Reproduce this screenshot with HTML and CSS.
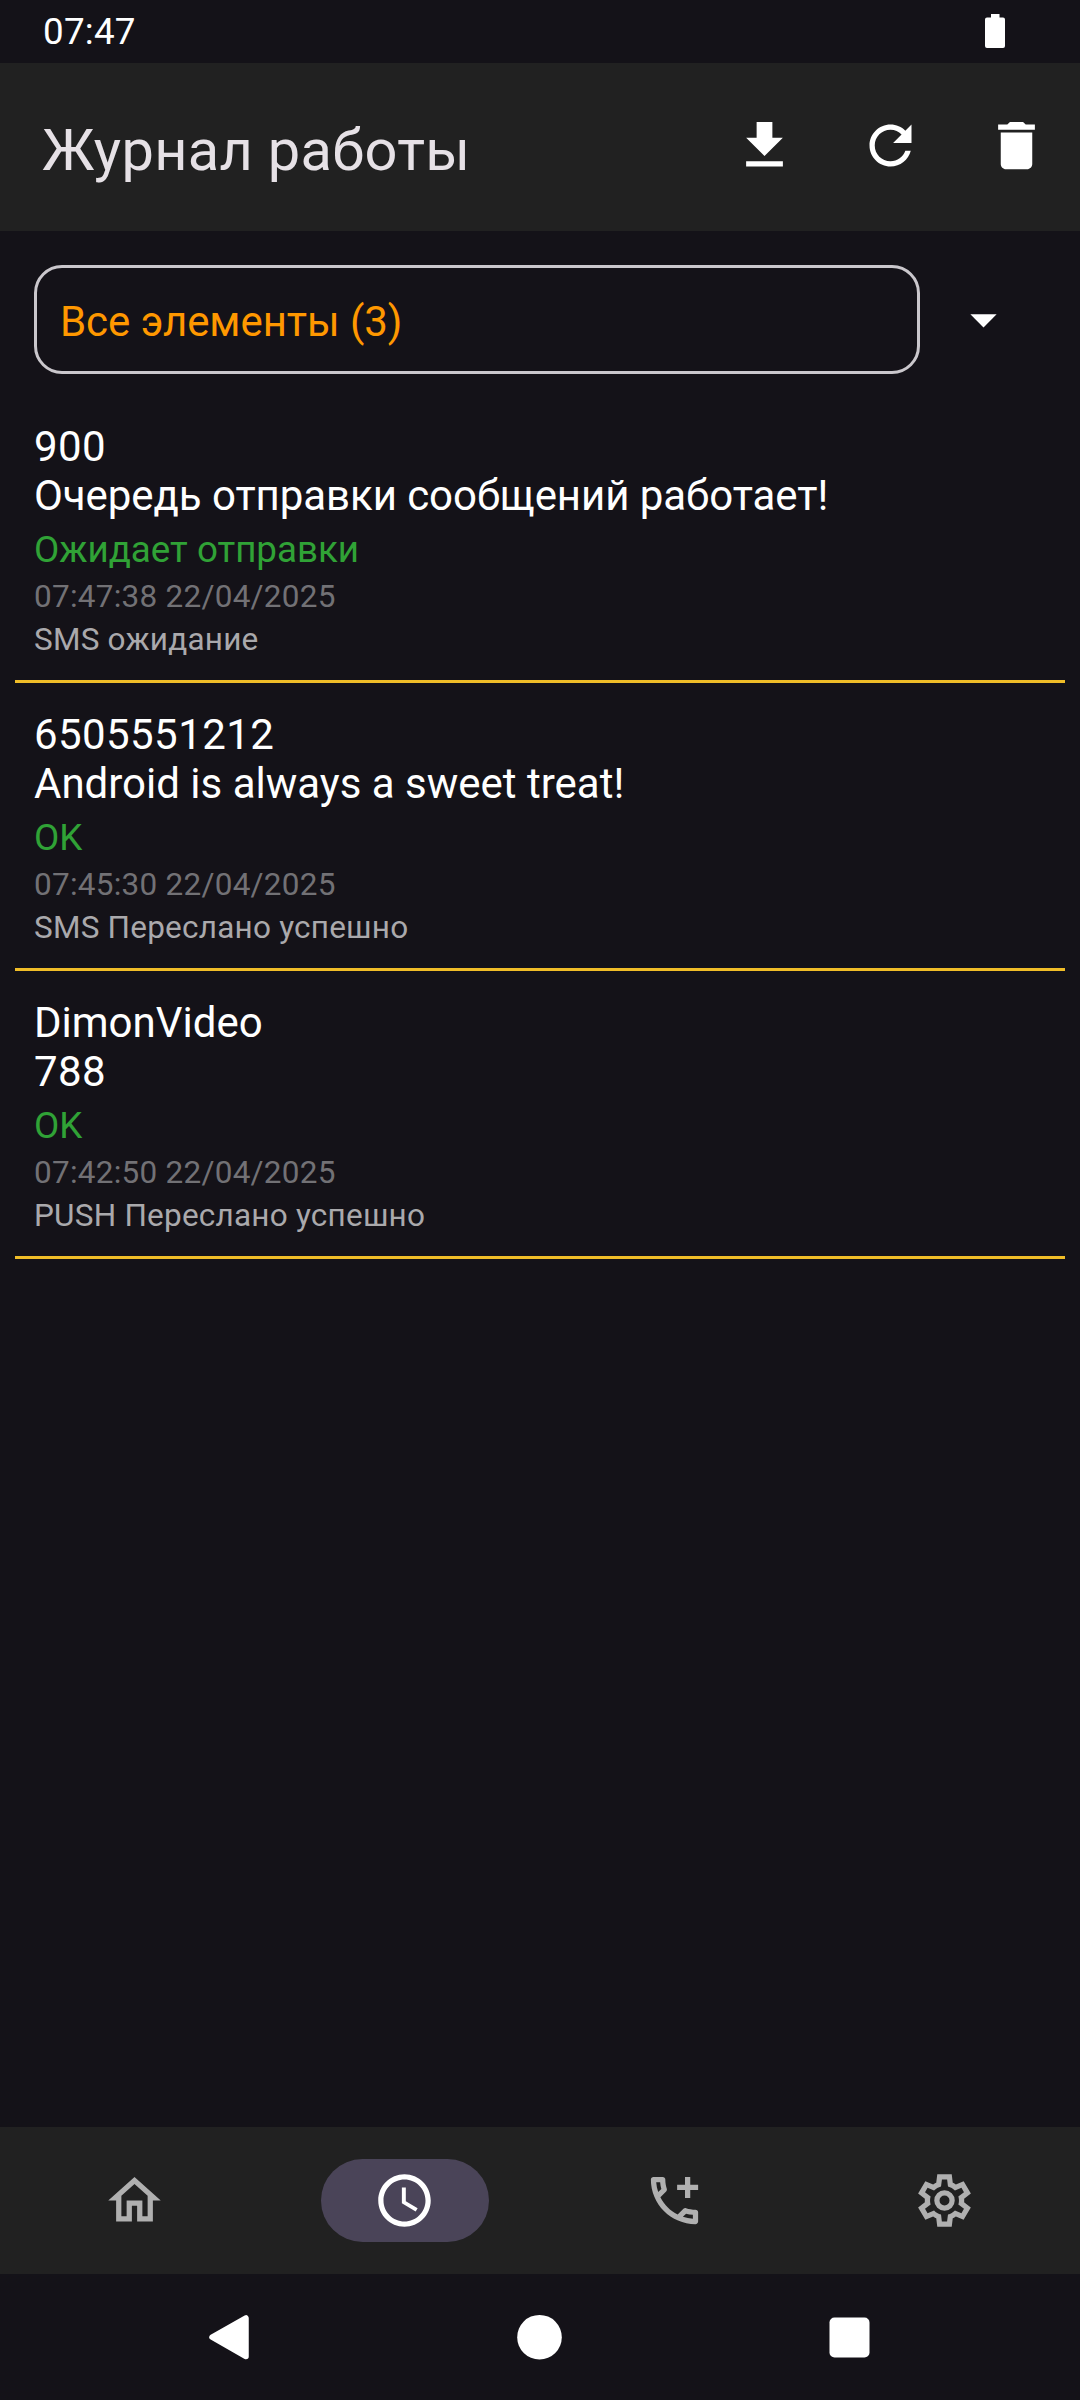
FILE: index.html
```html
<!DOCTYPE html>
<html lang="ru">
<head>
<meta charset="utf-8">
<title>Журнал работы</title>
<link rel="stylesheet" href="styles.css">
</head>
<body>
<div class="status-bar">
  <span class="clock">07:47</span>
  <svg class="battery" viewBox="0 0 20 34"><path d="M6 0h8.500v3.500H18a2 2 0 0 1 2 2V32a2 2 0 0 1-2 2H2a2 2 0 0 1-2-2V5.500a2 2 0 0 1 2-2h4z"/></svg>
</div>
<header class="app-bar">
  <h1 class="title">Журнал работы</h1>
  <div class="actions">
    <svg class="icon" viewBox="0 0 24 24"><path d="M19 9h-4V3H9v6H5l7 7 7-7zM5 18v2h14v-2H5z"/></svg>
    <svg class="icon" viewBox="0 0 24 24"><path d="M17.650 6.350C16.200 4.900 14.210 4 12 4c-4.420 0-7.990 3.580-7.990 8s3.570 8 7.990 8c3.730 0 6.840-2.550 7.730-6h-2.080c-.82 2.330-3.040 4-5.650 4-3.310 0-6-2.690-6-6s2.690-6 6-6c1.660 0 3.140.69 4.220 1.780L13 11h7V4l-2.350 2.350z"/></svg>
    <svg class="icon" viewBox="0 0 24 24"><path d="M6 19c0 1.100.9 2 2 2h8c1.100 0 2-.9 2-2V7H6v12zM19 4h-3.500l-1-1h-5l-1 1H5v2h14V4z"/></svg>
  </div>
</header>
<main class="content">
  <div class="filter">
    <div class="filter-value">Все элементы (3)</div>
    <svg class="icon" viewBox="0 0 24 24"><path d="M7 10l5 5 5-5z"/></svg>
  </div>
  <ul class="log">
    <li class="entry">
      <p class="text digits">900</p>
      <p class="text cyrillic">Очередь отправки сообщений работает!</p>
      <p class="state">Ожидает отправки</p>
      <p class="time">07:47:38 22/04/2025</p>
      <p class="result">SMS ожидание</p>
    </li>
    <li class="entry">
      <p class="text digits">6505551212</p>
      <p class="text">Android is always a sweet treat!</p>
      <p class="state">OK</p>
      <p class="time">07:45:30 22/04/2025</p>
      <p class="result">SMS Переслано успешно</p>
    </li>
    <li class="entry">
      <p class="text">DimonVideo</p>
      <p class="text digits">788</p>
      <p class="state">OK</p>
      <p class="time">07:42:50 22/04/2025</p>
      <p class="result">PUSH Переслано успешно</p>
    </li>
  </ul>
</main>
<nav class="tabs">
  <div class="tab"><span class="pill"><svg class="icon" viewBox="0 0 24 24"><path d="M12 5.690l5 4.500V18h-2v-6H9v6H7v-7.810l5-4.500M12 3L2 12h3v8h6v-6h2v6h6v-8h3L12 3z"/></svg></span></div>
  <div class="tab active"><span class="pill"><svg class="icon" viewBox="0 0 24 24"><path d="M11.990 2C6.470 2 2 6.480 2 12s4.470 10 9.990 10C17.520 22 22 17.520 22 12S17.520 2 11.990 2zM12 20c-4.420 0-8-3.580-8-8s3.580-8 8-8 8 3.580 8 8-3.580 8-8 8zm.5-13H11v6l5.250 3.150.75-1.230-4.500-2.670z"/></svg></span></div>
  <div class="tab"><span class="pill"><svg class="icon" viewBox="0 0 24 24"><path d="M20 15.500c-1.250 0-2.450-.2-3.570-.57-.1-.03-.21-.05-.31-.05-.26 0-.51.1-.71.290l-2.200 2.200c-2.830-1.440-5.150-3.750-6.590-6.590l2.200-2.200c.28-.28.360-.67.250-1.020C8.700 6.450 8.500 5.250 8.500 4c0-.55-.45-1-1-1H4c-.55 0-1 .45-1 1 0 9.390 7.610 17 17 17 .55 0 1-.45 1-1v-3.500c0-.55-.45-1-1-1zM5.030 5h1.500c.07.880.22 1.750.460 2.590L5.790 8.800c-.41-1.210-.67-2.480-.76-3.800zM19 18.970c-1.320-.09-2.600-.35-3.800-.76l1.200-1.200c.85.240 1.720.390 2.600.450v1.510zM18 6V3h-2v3h-3v2h3v3h2V8h3V6z"/></svg></span></div>
  <div class="tab"><span class="pill"><svg class="icon" viewBox="0 0 24 24"><path fill-rule="evenodd" d="M9.250 22l-.4-3.200q-.325-.125-.612-.3-.288-.175-.563-.375L4.700 19.375l-2.750-4.750 2.575-1.950Q4.500 12.500 4.500 12.337v-.675q0-.162.025-.337L1.950 9.375l2.750-4.750 2.975 1.250q.275-.2.575-.375.3-.175.6-.3l.4-3.200h5.500l.4 3.200q.325.125.613.3.287.175.562.375l2.975-1.250 2.750 4.750-2.575 1.950q.025.175.025.337v.675q0 .163-.05.338l2.575 1.950-2.750 4.750-2.950-1.250q-.275.2-.575.375-.3.175-.6.3l-.4 3.200ZM11 20h1.975l.35-2.650q.775-.2 1.438-.588.662-.387 1.212-.937l2.475 1.025.975-1.700-2.150-1.625q.125-.35.175-.738.05-.387.05-.787t-.05-.788q-.05-.387-.175-.737l2.150-1.625-.975-1.700-2.475 1.050q-.55-.575-1.212-.963-.663-.387-1.438-.587L13 4h-1.975l-.35 2.650q-.775.2-1.437.587-.663.388-1.213.938L5.550 7.150l-.975 1.700 2.150 1.600q-.125.375-.175.75-.05.375-.05.8 0 .4.05.775.05.375.175.75l-2.150 1.625.975 1.700 2.475-1.050q.55.575 1.213.962.662.388 1.437.588Z"/><circle class="hub" cx="12" cy="12" r="2.900"/></svg></span></div>
</nav>
<footer class="system-nav">
  <svg viewBox="0 0 1080 126"><path d="M246 44v38.500L212 63.200z" stroke="#fff" stroke-width="5.500" stroke-linejoin="round"/><circle cx="539.500" cy="63.200" r="22.300"/><rect x="829.500" y="43.500" width="40" height="40" rx="5"/></svg>
</footer>
</body>
</html>
```
FILE: styles.css
```css
* { box-sizing: border-box; margin: 0; padding: 0; }
body {
  width: 1080px;
  height: 2400px;
  display: flex;
  flex-direction: column;
  background: #141218;
  color: #fff;
  font-family: Roboto, "Noto Sans", sans-serif;
  overflow: hidden;
}
svg { display: block; fill: currentColor; }
.icon { width: 63px; height: 63px; flex: none; }

.status-bar {
  height: 63px;
  display: flex;
  justify-content: space-between;
  padding: 0 75px 0 43px;
}
.clock { font-size: 36.75px; line-height: 43px; padding-top: 10px; letter-spacing: 0.25px; }
.battery { width: 20px; height: 34px; margin-top: 14px; }

.app-bar {
  height: 168px;
  display: flex;
  justify-content: space-between;
  padding: 0 32px 0 42px;
  background: #212121;
}
.title {
  padding-top: 53px;
  font-size: 57.75px;
  font-weight: 400;
  line-height: 68px;
  letter-spacing: 0.3px;
  color: #e6e1e6;
}
.actions { display: flex; gap: 63px; padding-top: 51px; }

.content { flex: 1; padding: 34px 15px 0; }
.filter { display: flex; align-items: center; gap: 32px; padding-left: 19px; }
.filter-value {
  width: 886px;
  height: 109px;
  padding-left: 23px;
  border: 3px solid #cac7cc;
  border-radius: 28px;
  color: #ff9800;
  font-size: 42px;
  line-height: 107px;
  letter-spacing: -0.05px;
}
.log { list-style: none; padding-top: 21px; }
.entry { padding: 27px 19px 22px; border-bottom: 3px solid #f0bd28; }
.text { font-size: 42px; line-height: 49px; }
.digits { letter-spacing: 0.42px; }
.cyrillic { letter-spacing: -0.06px; }
.state { margin-top: 8px; font-size: 36.75px; line-height: 43px; color: #30a236; }
.time { margin-top: 7px; font-size: 31.5px; line-height: 37px; letter-spacing: 0.25px; color: #727175; }
.result { margin-top: 6px; font-size: 31.5px; line-height: 37px; letter-spacing: 0.22px; color: #aaa9ac; }

.tabs { height: 147px; display: flex; background: #212121; color: #b0b0b0; }
.tab { flex: 1; display: flex; align-items: flex-start; justify-content: center; padding-top: 32px; }
.pill {
  width: 168px;
  height: 83px;
  display: flex;
  align-items: center;
  justify-content: center;
  padding-right: 1px;
  border-radius: 42px;
}
.active .pill { background: #4a4458; color: #fff; }
.hub { fill: none; stroke: currentColor; stroke-width: 2; }

.system-nav { height: 126px; }
```
